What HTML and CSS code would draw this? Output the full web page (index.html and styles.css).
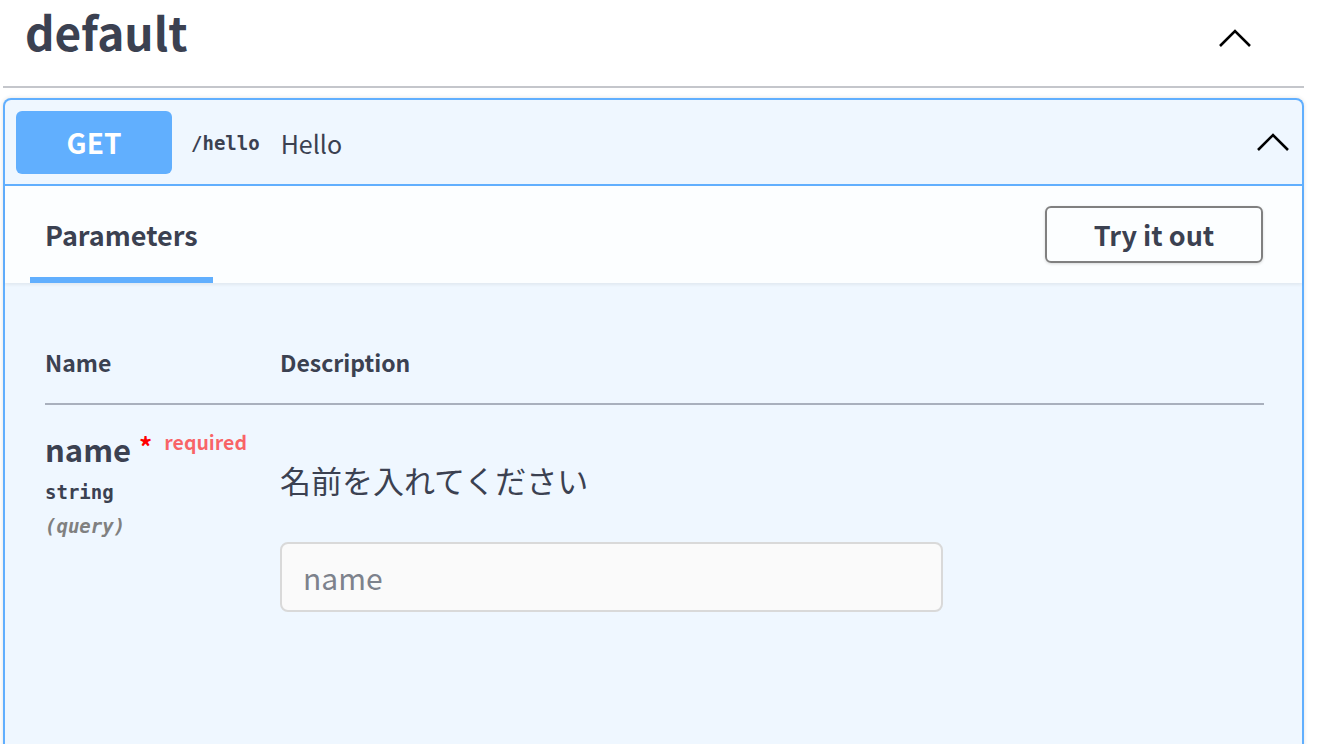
FILE: index.html
```html
<!DOCTYPE html>
<html lang="ja">
<head>
<meta charset="utf-8">
<title>Swagger UI</title>
<link rel="stylesheet" href="styles.css">
</head>
<body>
<div class="page">
  <div class="tag">
    <h3 class="tag-title">default</h3>
    <svg class="chev tag-chev" viewBox="0 0 34 20" width="34" height="20"><polyline points="2,18 17,3 32,18" fill="none" stroke="#000" stroke-width="2.6"/></svg>
  </div>

  <div class="opblock">
    <div class="summary">
      <span class="method">GET</span>
      <span class="path">/hello</span>
      <span class="summary-desc">Hello</span>
      <svg class="chev op-chev" viewBox="0 0 34 20" width="34" height="20"><polyline points="2,18 17,3 32,18" fill="none" stroke="#000" stroke-width="2.6"/></svg>
    </div>

    <div class="section-header">
      <div class="tab">Parameters</div>
      <button class="try-out">Try it out</button>
    </div>

    <div class="params">
      <div class="params-head">
        <div class="col-name">Name</div>
        <div class="col-desc">Description</div>
      </div>
      <div class="param-row">
        <div class="col-name">
          <div class="param-name">name<span class="star">*</span><span class="required">required</span></div>
          <div class="param-type">string</div>
          <div class="param-in">(query)</div>
        </div>
        <div class="col-desc">
          <p class="markdown">名前を入れてください</p>
          <input class="field" type="text" placeholder="name">
        </div>
      </div>
    </div>
  </div>
</div>
</body>
</html>
```

FILE: styles.css
```css
* { box-sizing: border-box; }
html, body { margin: 0; padding: 0; background: #fff; }
body {
  font-family: "Noto Sans CJK JP", "Noto Sans", sans-serif;
  color: #3b4151;
  overflow: hidden;
}
.page { padding: 0 16px 0 3px; }

.tag {
  display: flex;
  align-items: center;
  height: 88px;
  border-bottom: 2px solid #c4c6cb;
  padding: 0 52px 24px 22px;
}
.tag-title {
  margin: 0;
  flex: 1;
  font-size: 46px;
  font-weight: 700;
  line-height: 56px;
}
.tag-chev { position: relative; top: 7px; }
.chev { display: block; }

.opblock {
  margin-top: 10px;
  border: 2px solid #61affe;
  border-bottom: none;
  border-radius: 8px 8px 0 0;
  background: #eff7ff;
  box-shadow: 0 0 4px rgba(0,0,0,.12);
  height: 660px;
}
.summary {
  display: flex;
  align-items: center;
  height: 86px;
  padding: 0 12px 0 11px;
  border-bottom: 2px solid #61affe;
}
.method {
  width: 156px;
  height: 63px;
  border-radius: 6px;
  background: #61affe;
  color: #fff;
  font-size: 28px;
  font-weight: 700;
  display: flex;
  align-items: center;
  justify-content: center;
}
.path {
  margin-left: 19px;
  font-family: "DejaVu Sans Mono", monospace;
  font-size: 19px;
  font-weight: 700;
  padding-top: 1px;
}
.summary-desc {
  margin-left: 21px;
  font-size: 25px;
  flex: 1;
  padding-top: 2px;
}

.section-header {
  display: flex;
  align-items: center;
  justify-content: space-between;
  height: 97px;
  padding: 0 39px 0 25px;
  background: rgba(255,255,255,.8);
  box-shadow: 0 2px 3px rgba(0,0,0,.06);
}
.tab {
  position: relative;
  align-self: stretch;
  display: flex;
  align-items: center;
  padding: 0 15px 0;
  font-size: 27px;
  font-weight: 700;
}
.tab::after {
  content: "";
  position: absolute;
  left: 0; right: 0; bottom: 0;
  height: 6px;
  background: #61affe;
}
.try-out {
  width: 218px;
  height: 57px;
  border: 2px solid #808080;
  border-radius: 6px;
  background: transparent;
  font-family: inherit;
  font-size: 27px;
  font-weight: 700;
  color: #3b4151;
  box-shadow: 0 1px 3px rgba(0,0,0,.15);
  padding: 0;
}

.params { padding: 62px 38px 0 40px; }
.params-head {
  display: flex;
  border-bottom: 2px solid #a9b0bd;
  padding-bottom: 24px;
  font-size: 23px;
  font-weight: 700;
  line-height: 34px;
}
.col-name { width: 235px; flex: none; }
.col-desc { flex: 1; }
.param-row { display: flex; padding-top: 24px; }
.param-name {
  font-size: 31px;
  font-weight: 700;
  line-height: 40px;
  display: flex;
  align-items: flex-start;
}
.star {
  color: #ff0000;
  font-size: 26px;
  margin-left: 8px;
  line-height: 30px;
  position: relative;
  top: 2px;
}
.required {
  color: rgba(255,0,0,.6);
  font-size: 19.5px;
  font-weight: 600;
  margin-left: 12px;
  line-height: 26px;
}
.param-type {
  font-family: "DejaVu Sans Mono", monospace;
  font-size: 19px;
  font-weight: 700;
  line-height: 34px;
  margin-top: 6px;
}
.param-in {
  font-family: "DejaVu Sans Mono", monospace;
  font-size: 19px;
  font-style: italic;
  font-weight: 700;
  color: #808080;
  line-height: 34px;
}
.markdown {
  margin: 30px 0 0;
  font-size: 31px;
  line-height: 42px;
}
.field {
  display: block;
  margin-top: 41px;
  width: 663px;
  height: 70px;
  border: 2px solid #d9d9d9;
  border-radius: 8px;
  background: #fafafa;
  padding: 0 21px;
  font-family: inherit;
  font-size: 30px;
  color: #3b4151;
}
.field::placeholder { color: #7d828c; }
```
